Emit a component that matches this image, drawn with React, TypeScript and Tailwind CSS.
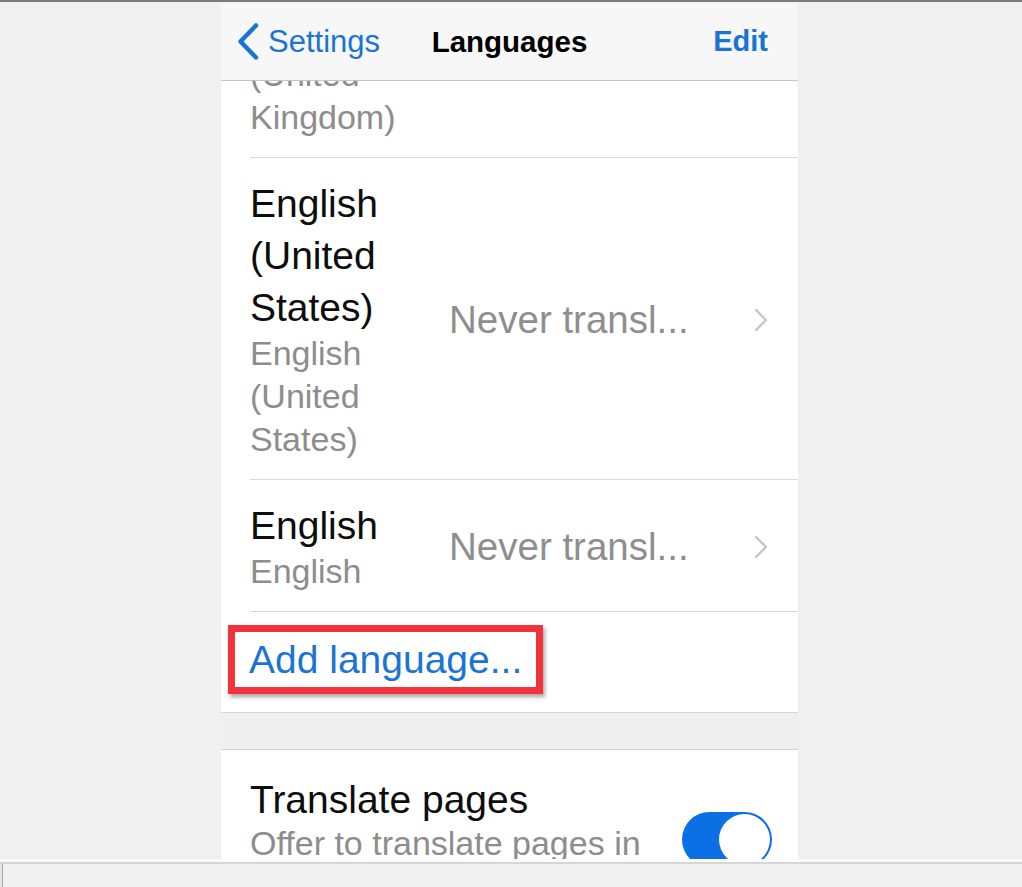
const blue = "text-[#1b74d4]";

function Chevron() {
  return (
    <svg width="14" height="24" viewBox="0 0 14 24" fill="none" className="shrink-0">
      <polyline points="2,2 12,12 2,22" stroke="#c6c6ca" strokeWidth="2.4" strokeLinecap="round" strokeLinejoin="round" />
    </svg>
  );
}

function LanguageRow({ main, sub }: { main: string[]; sub: string[] }) {
  return (
    <div className="pl-[29px]">
      <div className="flex items-center border-b border-[#d9d9d9] pr-[30px] pt-[20px] pb-[18px]">
        <div className="w-[199px] shrink-0">
          {main.map((l) => (
            <div key={l} className="text-[39px] leading-[52px] text-[#0d0d0d]">{l}</div>
          ))}
          <div className="-mt-[2px]">
            {sub.map((l) => (
              <div key={l} className="text-[34px] leading-[43px] text-[#8d8d8d]">{l}</div>
            ))}
          </div>
        </div>
        <div className="flex-1 text-[38.5px] leading-[44px] text-[#8e8e8e] whitespace-nowrap">Never transl...</div>
        <Chevron />
      </div>
    </div>
  );
}

export default function App() {
  return (
    <div className="w-[1022px] h-[887px] bg-[#f0f0f0] flex flex-col overflow-hidden font-['Liberation_Sans',Arial,sans-serif]">
      <div className="h-[2px] bg-[#7c7c7c] shrink-0" />
      <div className="h-[1px] shrink-0" />

      <div className="ml-[221px] w-[577px] h-[856px] shrink-0 bg-white flex flex-col overflow-hidden">
        {/* nav bar */}
        <div className="h-[78px] shrink-0 bg-[#f7f7f7] border-b border-[#c4c4c4] grid grid-cols-[1fr_auto_1fr] items-center">
          <div className={`flex items-center gap-[9px] pl-[16px] ${blue}`}>
            <svg width="22" height="37" viewBox="0 0 22 37" fill="none">
              <polyline points="19,2.5 3.5,18.5 19,34.5" stroke="#1b74d4" strokeWidth="4.5" strokeLinecap="round" strokeLinejoin="round" />
            </svg>
            <span className="text-[31px] leading-none">Settings</span>
          </div>
          <div className="text-[29.5px] font-bold leading-none text-black">Languages</div>
          <div className={`text-[29px] font-bold leading-none text-right pr-[30px] ${blue}`}>Edit</div>
        </div>

        {/* list, scrolled so the first row sits under the nav bar */}
        <div className="flex-1 overflow-hidden">
          <div className="pl-[29px]">
            <div className="border-b border-[#d9d9d9] -mt-[28px] pb-[18px]">
              <div className="text-[34px] leading-[43px] text-[#8d8d8d]">(United</div>
              <div className="text-[34px] leading-[43px] text-[#8d8d8d]">Kingdom)</div>
            </div>
          </div>
          <LanguageRow main={["English", "(United", "States)"]} sub={["English", "(United", "States)"]} />
          <LanguageRow main={["English"]} sub={["English"]} />

          <div className="border-b border-[#d4d4d4] pl-[7px] pt-[13px] pb-[18px]">
            <div className="inline-block border-[7px] border-[#f3333b] shadow-[2px_3px_4px_rgba(0,0,0,0.35)] pl-[14px] pr-[14px]">
              <span className={`text-[39px] leading-[55px] ${blue}`}>Add language...</span>
            </div>
          </div>

          <div className="h-[37px] bg-[#efefef] border-b border-[#d0d0d0]" />

          <div className="flex items-start pl-[29px] pr-[26px]">
            <div className="flex-1 pt-[24px]">
              <div className="text-[39px] leading-[52px] text-[#0d0d0d]">Translate pages</div>
              <div className="-mt-[4px] text-[34px] leading-[43px] text-[#8d8d8d] whitespace-nowrap">Offer to translate pages in</div>
            </div>
            <div className="mt-[62px] w-[90px] h-[55px] rounded-full bg-[#0a70e4] flex items-center justify-end p-[2px] shrink-0">
              <div className="w-[51px] h-[51px] rounded-full bg-white" />
            </div>
          </div>
        </div>
      </div>

      <div className="h-[3px] bg-[#fbfbfb] shrink-0" />
      <div className="h-[2px] bg-[#d6d6d6] shrink-0" />
      <div className="flex-1 flex">
        <div className="w-[3px] border-r border-[#a8a8a8] bg-[#e6e6e6]" />
      </div>
    </div>
  );
}
